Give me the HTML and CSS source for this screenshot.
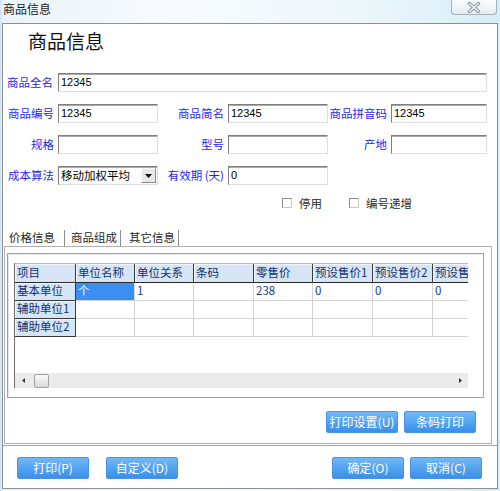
FILE: index.html
```html
<!DOCTYPE html>
<html lang="zh-CN">
<head>
<meta charset="utf-8">
<title>商品信息</title>
<link rel="stylesheet" href="styles.css">
</head>
<body>
<div class="frame">
  <div class="titlebar">
    <span class="title">商品信息</span>
    <div class="close">
      <svg width="14" height="11" viewBox="0 0 14 11">
        <path d="M2.5 1.5 L11.5 9.5 M11.5 1.5 L2.5 9.5" stroke="#8a949e" stroke-width="3.4" stroke-linecap="round" fill="none"/>
        <path d="M2.5 1.5 L11.5 9.5 M11.5 1.5 L2.5 9.5" stroke="#f4f7f9" stroke-width="1.4" stroke-linecap="round" fill="none"/>
      </svg>
    </div>
  </div>
  <div class="client">
    <h1 class="heading">商品信息</h1>
    <div class="form">
      <span class="lbl">商品全名</span>
      <div class="field wide">12345</div>

      <span class="lbl">商品编号</span>
      <div class="field">12345</div>
      <span class="lbl">商品简名</span>
      <div class="field">12345</div>
      <span class="lbl">商品拼音码</span>
      <div class="field">12345</div>

      <span class="lbl">规格</span>
      <div class="field"></div>
      <span class="lbl">型号</span>
      <div class="field"></div>
      <span class="lbl">产地</span>
      <div class="field"></div>

      <span class="lbl">成本算法</span>
      <div class="field select">
        <span class="select-text">移动加权平均</span>
        <span class="drop"><svg width="7" height="4" viewBox="0 0 7 4"><path d="M0 0 H7 L3.5 4 Z" fill="#111"/></svg></span>
      </div>
      <span class="lbl">有效期 (天)</span>
      <div class="field">0</div>
    </div>

    <div class="checks">
      <label class="check"><span class="box"></span>停用</label>
      <label class="check"><span class="box"></span>编号递增</label>
    </div>

    <div class="tabs">
      <span class="tab tab-active">价格信息</span>
      <span class="tab">商品组成</span>
      <span class="tab">其它信息</span>
    </div>
    <div class="tabbody">
      <div class="page">
        <div class="grid">
          <div class="rows">
            <div class="gtable">
              <div class="hc">项目</div>
              <div class="hc">单位名称</div>
              <div class="hc">单位关系</div>
              <div class="hc">条码</div>
              <div class="hc">零售价</div>
              <div class="hc">预设售价1</div>
              <div class="hc">预设售价2</div>
              <div class="hc">预设售价3</div>

              <div class="rh">基本单位</div>
              <div class="dc sel">个</div>
              <div class="dc">1</div>
              <div class="dc"></div>
              <div class="dc">238</div>
              <div class="dc">0</div>
              <div class="dc">0</div>
              <div class="dc">0</div>

              <div class="rh">辅助单位1</div>
              <div class="dc"></div>
              <div class="dc"></div>
              <div class="dc"></div>
              <div class="dc"></div>
              <div class="dc"></div>
              <div class="dc"></div>
              <div class="dc"></div>

              <div class="rh">辅助单位2</div>
              <div class="dc"></div>
              <div class="dc"></div>
              <div class="dc"></div>
              <div class="dc"></div>
              <div class="dc"></div>
              <div class="dc"></div>
              <div class="dc"></div>
            </div>
          </div>
          <div class="hscroll">
            <span class="arrow"><svg width="3" height="5" viewBox="0 0 3 5"><path d="M3 0 V5 L0 2.5 Z" fill="#333"/></svg></span>
            <span class="thumb"></span>
            <span class="track"></span>
            <span class="arrow"><svg width="3" height="5" viewBox="0 0 3 5"><path d="M0 0 V5 L3 2.5 Z" fill="#333"/></svg></span>
          </div>
        </div>
      </div>
      <div class="page-buttons">
        <button class="btn">打印设置(U)</button>
        <button class="btn">条码打印</button>
      </div>
    </div>

    <div class="separator"></div>

    <div class="footer">
      <div class="group">
        <button class="btn">打印(P)</button>
        <button class="btn">自定义(D)</button>
      </div>
      <div class="group group-right">
        <button class="btn">确定(O)</button>
        <button class="btn">取消(C)</button>
      </div>
    </div>
  </div>
</div>
</body>
</html>
```

FILE: styles.css
```css
* { box-sizing: border-box; }

html, body {
  margin: 0;
  padding: 0;
}

body {
  width: 500px;
  height: 491px;
  overflow: hidden;
  font-family: "Noto Sans CJK SC", "Liberation Sans", sans-serif;
  font-size: 11.5px;
  color: #222;
  background: linear-gradient(90deg, #cfe3f2 0px, #eaf4fa 3px, #f8fbfd 35%, #eef7fb 70%, #d6eef8 100%);
}

.frame {
  width: 500px;
  height: 491px;
  display: flex;
  flex-direction: column;
}

/* title bar */
.titlebar {
  height: 23px;
  display: flex;
  justify-content: space-between;
  align-items: flex-start;
}

.title {
  margin: 2px 0 0 3px;
  font-size: 12px;
  line-height: 14px;
  color: #1b1b1b;
}

.close {
  width: 46px;
  height: 15px;
  margin-right: 3px;
  border: 1px solid #a7b1bb;
  border-top: none;
  border-radius: 0 0 4px 4px;
  background: linear-gradient(#fbfdfe, #e4ebf1);
  display: flex;
  align-items: center;
  justify-content: center;
}

/* client area */
.client {
  margin-left: 2px;
  width: 496px;
  height: 466px;
  border: 1px solid #8f8f8f;
  background: #fff;
  display: flex;
  flex-direction: column;
}

.heading {
  margin: 0;
  padding: 4px 0 0 25px;
  font-size: 19px;
  line-height: 26px;
  font-weight: normal;
  color: #111;
}

/* form */
.form {
  margin-top: 19px;
  display: grid;
  grid-template-columns: 55px 100px 70px 100px 63px 96px;
  grid-auto-rows: 19px;
  row-gap: 12px;
}

.lbl {
  text-align: right;
  padding-right: 4px;
  line-height: 19px;
  color: #1f1fee;
  white-space: nowrap;
}

.form .lbl:first-child { padding-right: 5px; }

.field {
  height: 19px;
  border: 1px solid;
  border-color: #7f7f7f #dedede #dedede #7f7f7f;
  box-shadow: inset 0 1px 0 #a9a9a9;
  background: #fff;
  padding-left: 2px;
  font-family: "Liberation Sans", sans-serif;
  font-size: 11px;
  line-height: 17px;
  color: #000;
  white-space: nowrap;
  overflow: hidden;
}

.field.wide { grid-column: 2 / 7; }

.select {
  display: flex;
  align-items: center;
  justify-content: space-between;
  padding-right: 1px;
  font-family: "Noto Sans CJK SC", sans-serif;
  font-size: 11.5px;
}

.select-text { line-height: 15px; }

.drop {
  width: 15px;
  height: 15px;
  background: #e8e8e8;
  border: 1px solid;
  border-color: #fafafa #8a8a8a #8a8a8a #fafafa;
  display: flex;
  align-items: center;
  justify-content: center;
}

/* check boxes */
.checks {
  margin-top: 11px;
  height: 14px;
  display: flex;
  align-items: center;
  padding-left: 279px;
}

.check {
  display: flex;
  align-items: center;
  line-height: 14px;
  color: #2a2a2a;
}

.check + .check { margin-left: 27px; }

.box {
  width: 10px;
  height: 10px;
  margin-right: 7px;
  border: 1px solid;
  border-color: #8c8c8c #c9c9c9 #c9c9c9 #8c8c8c;
  background: #fff;
}

/* tabs */
.tabs {
  margin: 18px 0 0 1px;
  height: 18px;
  display: flex;
  align-items: flex-end;
}

.tab {
  height: 16px;
  line-height: 15px;
  padding: 0 3px 0 8px;
  border-right: 1px solid #8d8d8d;
  color: #262626;
  white-space: nowrap;
}

.tab-active { padding: 0 9px 0 5px; }
.tab-active + .tab { padding-left: 6px; }

.tabbody {
  margin-left: 1px;
  width: 488px;
  height: 198px;
  border: 1px solid #b0b0b0;
  display: flex;
  flex-direction: column;
}

.page {
  margin: 6px 0 0 2px;
  width: 477px;
  height: 145px;
  border: 1px solid #a2a2a2;
  box-shadow: inset 1px 1px 0 #e6e6e6;
}

.page-buttons {
  margin-top: 13px;
  padding-right: 15px;
  display: flex;
  justify-content: flex-end;
  gap: 6px;
}

/* grid */
.grid {
  margin: 9px 0 0 6px;
  width: 454px;
  height: 125px;
  border-left: 1px solid #6e6e6e;
  border-top: 1px solid #b9b9b9;
  display: flex;
  flex-direction: column;
  overflow: hidden;
}

.rows {
  flex: 1;
  overflow: hidden;
}

.gtable {
  display: grid;
  grid-template-columns: 61px 59px 59px 60px 59px 60px 60px 60px;
  grid-template-rows: 19px 18px 18px 18px;
  width: 478px;
}

.hc, .rh, .dc {
  padding-left: 2px;
  line-height: 15px;
  white-space: nowrap;
  overflow: hidden;
}

.hc {
  background: #d6e5f6;
  color: #14306c;
  border-right: 1px solid #3a3a3a;
  border-bottom: 1px solid #2a2a2a;
  box-shadow: inset 1px 1px 0 #eef4fb;
  padding-top: 1px;
}

.rh {
  background: #d6e5f6;
  color: #14306c;
  border-right: 1px solid #3a3a3a;
  border-bottom: 1px solid #3a3a3a;
  box-shadow: inset 1px 1px 0 #eef4fb;
}

.dc {
  color: #1b3a8c;
  border-right: 1px solid #d2d2d2;
  border-bottom: 1px solid #d2d2d2;
}

.dc.sel {
  background: #3a8ff0;
  color: #fff;
}

.hscroll {
  height: 15px;
  background: #ebebeb;
  display: flex;
  align-items: center;
}

.arrow {
  width: 16px;
  height: 15px;
  display: flex;
  align-items: center;
  justify-content: center;
}

.thumb {
  width: 15px;
  height: 14px;
  margin-left: 3px;
  border: 1px solid #a3a3a3;
  border-radius: 2px;
  background: linear-gradient(#fbfbfb, #d9d9d9);
}

.track { flex: 1; }

/* separator and footer */
.separator {
  margin-top: 1px;
  height: 2px;
  border-top: 1px solid #a3a3a3;
  border-bottom: 1px solid #ffffff;
}

.footer {
  padding: 10px 15px 0 14px;
  display: flex;
  justify-content: space-between;
}

.group {
  display: flex;
  gap: 17px;
}

.group-right { gap: 6px; }

.btn {
  width: 72px;
  height: 22px;
  padding: 0;
  border: 1px solid #4594ea;
  border-radius: 2px;
  background: linear-gradient(#70b8f8, #3b8fea);
  color: #fff;
  font-family: "Noto Sans CJK SC", "Liberation Sans", sans-serif;
  font-size: 12px;
  line-height: 20px;
  white-space: nowrap;
}
```
